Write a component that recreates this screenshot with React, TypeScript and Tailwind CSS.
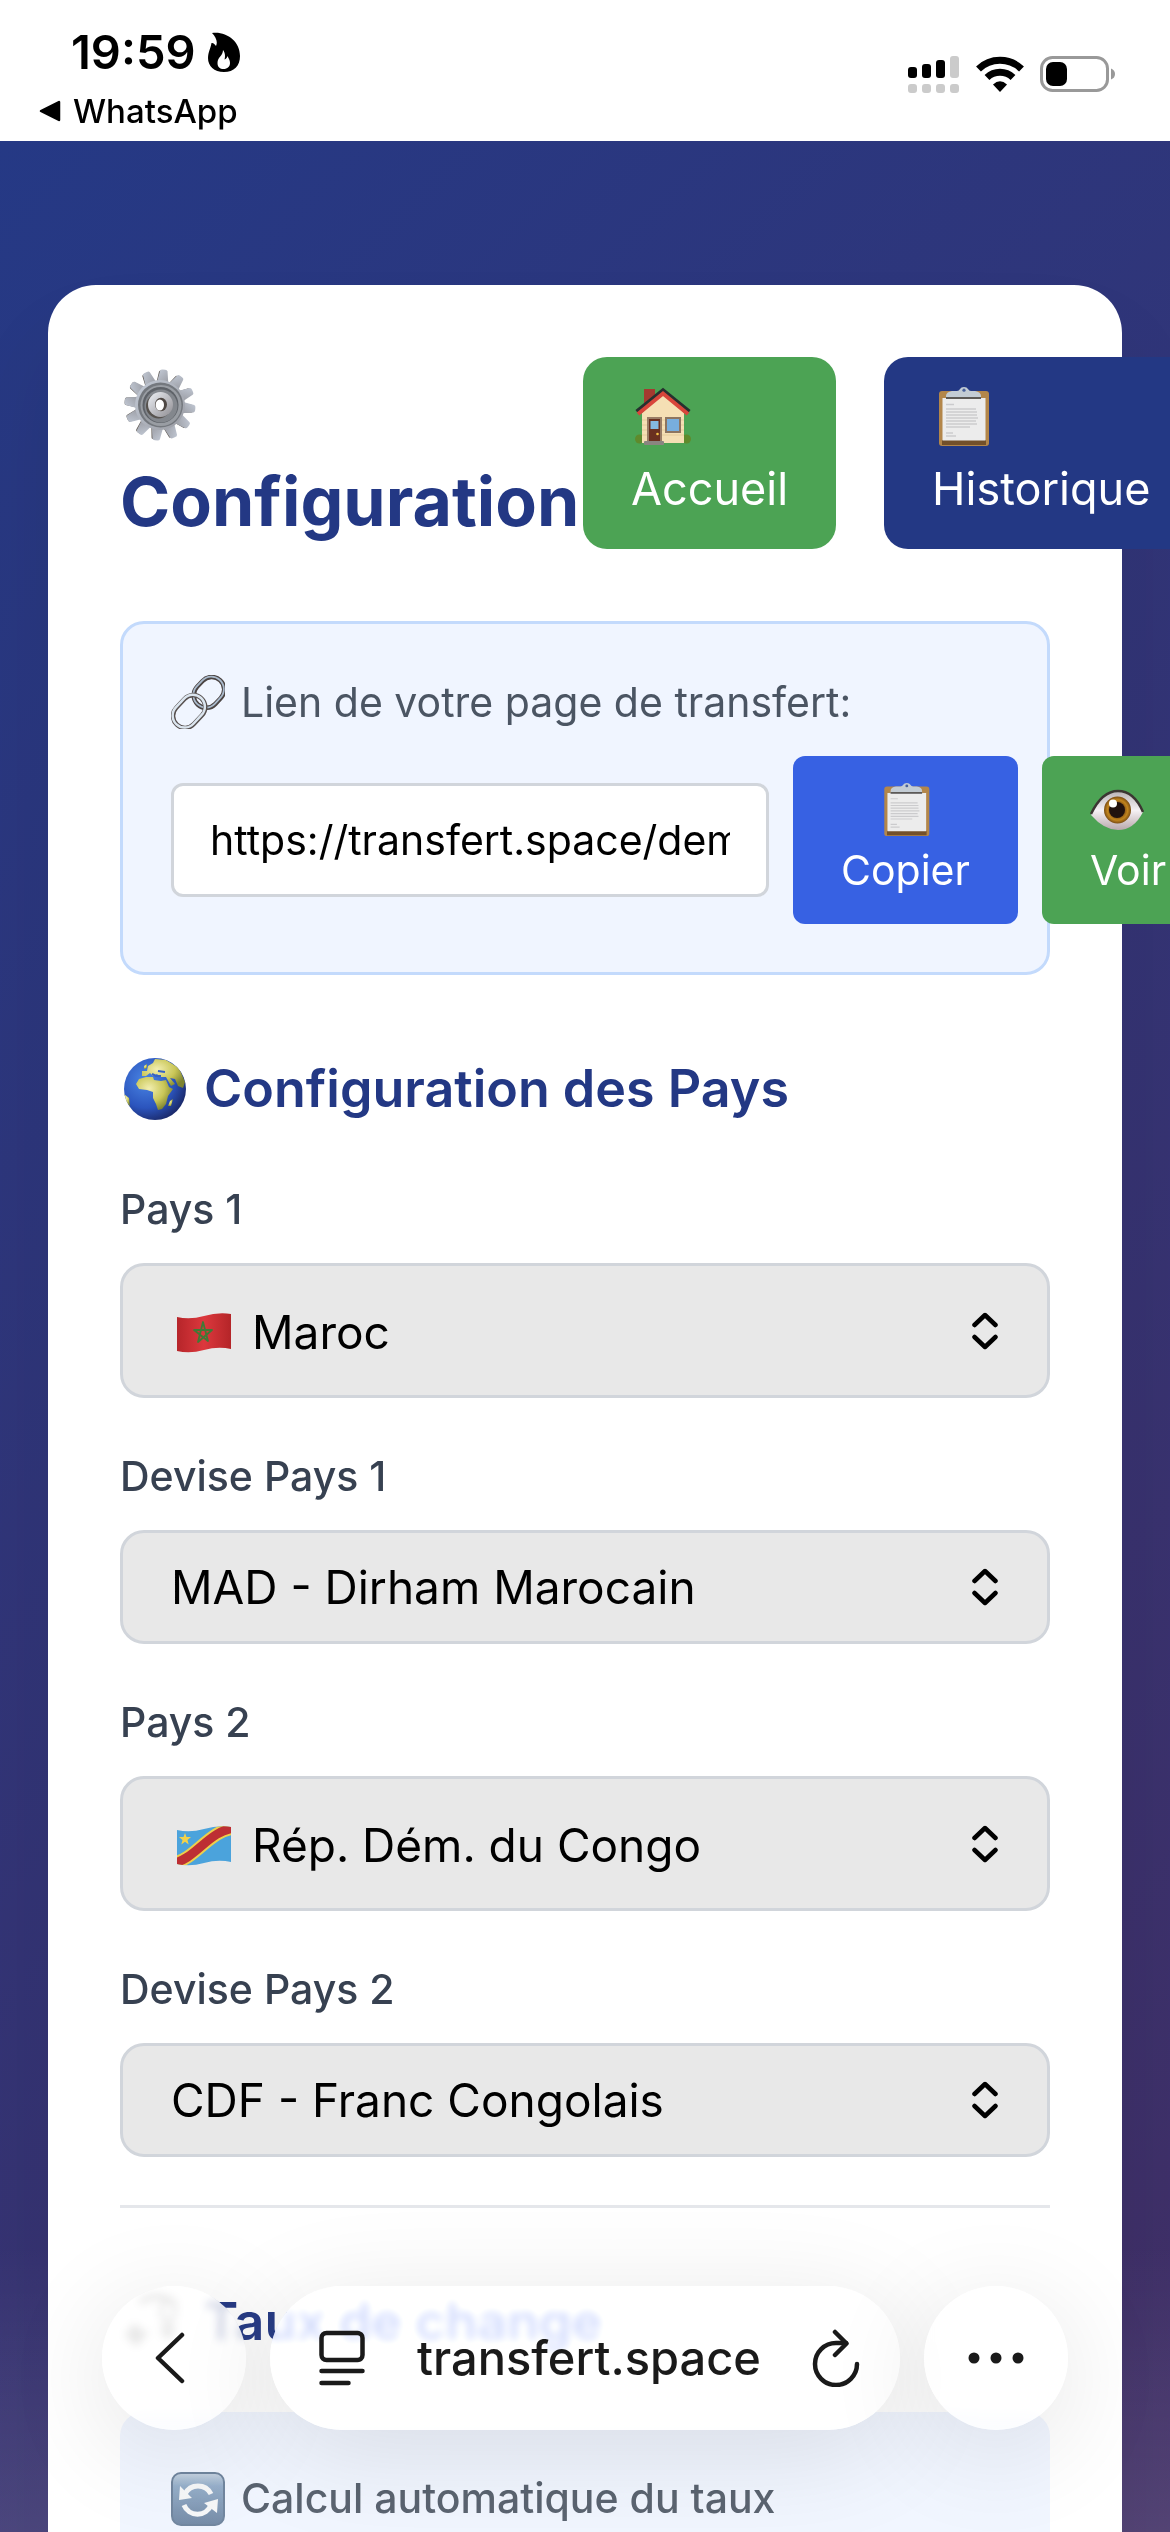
import React, { useState } from "react";

const TEETH = Array.from({ length: 12 }, (_, i) => i * 30 + 6);

function GearIcon() {
  return (
    <svg viewBox="0 0 72 72" className="h-[72px] w-[72px] shrink-0" aria-hidden="true">
      <defs>
        <linearGradient id="gearMetal" x1="0" y1="0" x2="1" y2="1">
          <stop offset="0" stopColor="#c3cad6" />
          <stop offset="1" stopColor="#9a9ca3" />
        </linearGradient>
        <linearGradient id="gearHub" x1="0" y1="0" x2="1" y2="1">
          <stop offset="0" stopColor="#eef1f6" />
          <stop offset="1" stopColor="#8f8d92" />
        </linearGradient>
      </defs>
      {TEETH.map((a) => (
        <path key={"s" + a} d="M31 14 L32.500 2 Q33 0.500 35 0.500 H38 Q40 0.500 40 2 L41.500 14 Z" fill="#5c5650" transform={`rotate(${a} 35 36) translate(-1 1)`} />
      ))}
      {TEETH.map((a) => (
        <path key={a} d="M30.500 14 L32.500 2 Q33 0.500 35 0.500 H37.500 Q39.500 0.500 40 2 L42 14 Z" fill="url(#gearMetal)" transform={`rotate(${a} 36 36)`} />
      ))}
      <circle cx="36" cy="36" r="25" fill="url(#gearMetal)" />
      <circle cx="36.500" cy="36" r="22.500" fill="#74787e" />
      <circle cx="37" cy="36.500" r="20.500" fill="#999da3" />
      <circle cx="36.500" cy="36" r="18" fill="#5e6268" />
      <circle cx="37" cy="37" r="16.500" fill="#83878d" />
      <circle cx="34.500" cy="37" r="12.500" fill="#57534f" />
      <circle cx="36.500" cy="35.500" r="12.500" fill="url(#gearHub)" />
      <ellipse cx="37" cy="35.500" rx="6" ry="6.800" fill="#4e4743" />
      <ellipse cx="35.800" cy="36" rx="4.200" ry="5.500" fill="#fff" />
    </svg>
  );
}

function HouseIcon() {
  return (
    <svg viewBox="0 0 60 60" className="h-[60px] w-[60px]" aria-hidden="true">
      <circle cx="8.500" cy="52" r="4.500" fill="#5f8a2c" />
      <circle cx="55.500" cy="52" r="4.500" fill="#5f8a2c" />
      <path d="M13 2 h11 v10 l-11 11z" fill="#a53a30" />
      <path d="M11 56 V26 L32 7 L53 26 V56z" fill="#f5dfb4" />
      <path d="M11 33h42M11 38h42M11 43h42M11 48h42" stroke="#e6cc9b" strokeWidth="1" />
      <path d="M6 25 L32 4 L58 25" fill="none" stroke="#27302f" strokeWidth="5" />
      <path d="M7 27 L32 6.500 L57 27" fill="none" stroke="#d8453b" strokeWidth="4" />
      <rect x="16" y="30" width="15" height="26" fill="#9a7d66" />
      <rect x="18" y="32" width="11" height="24" fill="#6a3020" />
      <rect x="19.500" y="34" width="8" height="8" fill="#84b9e2" />
      <circle cx="26.500" cy="47" r="1.300" fill="#f6c648" />
      <rect x="34" y="30" width="16" height="16" fill="#8d7560" />
      <rect x="36" y="32" width="12" height="12" fill="#78aedd" />
      <rect x="13" y="54" width="20" height="4" rx="1" fill="#8a8580" />
    </svg>
  );
}

function ClipboardIcon({ className }: { className: string }) {
  return (
    <svg viewBox="0 0 60 60" className={className} aria-hidden="true">
      <rect x="7" y="4" width="50" height="55" rx="3" fill="#b3864a" />
      <path d="M10 53h44v5H10z" fill="#73502a" />
      <path d="M10.500 11h43v42.500h-43z" fill="#ececec" />
      <path d="M14 17.500h8M14 22h30M14 25h31M14 28h31M14 31h32M14 34h30M14 37h31M14 40h24M14 46h7M14 49h10" stroke="#cbcbcd" strokeWidth="1.300" />
      <path d="M14 12 v-3 q0-4 6-5 h5 q2 0 3-2 q1-2 4-2 q3 0 4 2 q1 2 3 2 h4 q6 1 6 5 v3z" fill="#c3ccd4" />
      <path d="M14 10h35v2H14z" fill="#5d5a57" />
      <circle cx="32" cy="3.200" r="1.600" fill="#49629c" />
    </svg>
  );
}

function LinkIcon() {
  return (
    <svg viewBox="0 0 54 54" className="h-[54px] w-[54px]" aria-hidden="true">
      <g fill="none" transform="rotate(-47 27 27)">
        <rect x="25" y="16" width="33" height="25" rx="12.500" stroke="#4b4443" strokeWidth="4.500" />
        <rect x="25" y="15.500" width="33" height="25" rx="12.500" stroke="#a9b9cb" strokeWidth="1.800" />
        <rect x="-4" y="15" width="36" height="24" rx="12" stroke="#57504f" strokeWidth="4.500" />
        <rect x="-4" y="14.500" width="36" height="24" rx="12" stroke="#dbe5ef" strokeWidth="2.500" />
      </g>
    </svg>
  );
}

function EyeIcon() {
  return (
    <svg viewBox="0 0 54 42" className="h-[42px] w-[54px]" aria-hidden="true">
      <defs>
        <radialGradient id="iris">
          <stop offset="0.400" stopColor="#6a3c10" />
          <stop offset="0.750" stopColor="#c2851d" />
          <stop offset="1" stopColor="#7a4c12" />
        </radialGradient>
        <linearGradient id="sclera" x1="0" y1="0" x2="0" y2="1">
          <stop offset="0" stopColor="#b9b3b6" />
          <stop offset="0.500" stopColor="#f5f1f4" />
          <stop offset="1" stopColor="#b9a8ac" />
        </linearGradient>
      </defs>
      <path d="M1 26 Q12 2 28 2 Q44 2 53 23 Q44 41 28 41 Q14 41 1 26z" fill="url(#sclera)" />
      <path d="M1 25 Q12 2 28 2 Q44 2 53 23" fill="none" stroke="#3b3632" strokeWidth="2.500" />
      <circle cx="27.500" cy="21" r="13.500" fill="url(#iris)" />
      <circle cx="27" cy="21" r="8" fill="#21120e" />
      <circle cx="23" cy="14.500" r="4" fill="#fff" />
    </svg>
  );
}

function GlobeIcon() {
  return (
    <svg viewBox="0 0 62 62" className="h-[62px] w-[62px]" aria-hidden="true">
      <defs>
        <radialGradient id="sea" cx="0.350" cy="0.350" r="0.700">
          <stop offset="0" stopColor="#4a86e4" />
          <stop offset="0.650" stopColor="#2b54bd" />
          <stop offset="1" stopColor="#1b2a6c" />
        </radialGradient>
        <radialGradient id="land" cx="0.350" cy="0.350" r="0.700">
          <stop offset="0" stopColor="#f2eeb0" />
          <stop offset="0.600" stopColor="#c9c657" />
          <stop offset="1" stopColor="#7d8330" />
        </radialGradient>
        <clipPath id="globeClip"><circle cx="31" cy="31" r="31" /></clipPath>
      </defs>
      <circle cx="31" cy="31" r="31" fill="url(#sea)" />
      <g fill="url(#land)" clipPath="url(#globeClip)">
        <path d="M15 21 L22 19 L29 19 L30 22 L37 23 L42 22 L45 29 L49 31 L44 38 L42 46 L38 51 L34 52 L32 46 L29 40 L29 34 L23 32 L15 31 L12 26z" />
        <path d="M18 18 L18 13 L23 13 L24 8 L29 5 L31 1 L42 2 L55 10 L61 24 L59 30 L54 28 L51 21 L46 20 L51 26 L47 28 L42 19 L36 19 L33 16 L29 18 L26 15 L22 18z" />
        <path d="M46 43 L49 41 L47 48 L44 48z" />
        <path d="M0 36 L5 40 L6 48 L1 44z" />
        <path d="M20 8l3-2 0 4-3 1z" />
      </g>
      <path d="M28 16l4 2 5 0M34 13l7 1" stroke="#3561c5" strokeWidth="2.200" fill="none" />
    </svg>
  );
}

function MoroccoFlag() {
  return (
    <svg viewBox="0 0 54 40" className="h-10 w-[54px]" aria-hidden="true">
      <defs>
        <linearGradient id="maCloth">
          <stop offset="0" stopColor="#b6252a" />
          <stop offset="0.500" stopColor="#dc383d" />
          <stop offset="1" stopColor="#b42528" />
        </linearGradient>
      </defs>
      <path d="M0 4 Q13 7 27 3 T54 1 V36 Q41 33 27 37 T0 38z" fill="url(#maCloth)" />
      <path d="M26 9 L31 28 L17 17 H35 L21 29z" fill="none" stroke="#3f7a35" strokeWidth="1.800" strokeLinejoin="round" />
    </svg>
  );
}

function CongoFlag() {
  return (
    <svg viewBox="0 0 54 40" className="h-10 w-[54px]" aria-hidden="true">
      <defs>
        <clipPath id="cdCloth"><path d="M0 4 Q13 7 27 3 T54 1 V36 Q41 33 27 37 T0 38z" /></clipPath>
      </defs>
      <g clipPath="url(#cdCloth)">
        <path d="M0 0h54v40H0z" fill="#4ba3dc" />
        <path d="M-4 37 C18 34 32 4 58 2" fill="none" stroke="#edcf4b" strokeWidth="13" />
        <path d="M-4 37 C18 34 32 4 58 2" fill="none" stroke="#bd2e33" strokeWidth="9" />
        <path d="M8 7l1.500 4h4.500l-3.500 3 1.200 4.500L8 15.800 4.300 18.500 5.500 14 2 11h4.500z" fill="#f2d24a" />
      </g>
    </svg>
  );
}

function ExchangeIcon() {
  return (
    <svg viewBox="0 0 62 62" className="h-[62px] w-[62px]" fill="none" stroke="#8b8b8b" strokeWidth="6" aria-hidden="true">
      <path d="M16 12 A26 26 0 0 1 52 14" />
      <path d="M0 46 L10 32 L24 44z" fill="#8b8b8b" stroke="none" />
      <path d="M0 42 L12 56 L26 40z" fill="#8b8b8b" stroke="none" />
      <ellipse cx="44" cy="20" rx="7" ry="10" strokeWidth="4" />
      <path d="M44 30v18M36 37h16M37 43h14" strokeWidth="4" />
    </svg>
  );
}

function RefreshBadge() {
  return (
    <svg viewBox="0 0 54 54" className="h-[54px] w-[54px]" aria-hidden="true">
      <defs>
        <linearGradient id="badge" x1="0" y1="0" x2="0" y2="1">
          <stop offset="0" stopColor="#c1cfde" />
          <stop offset="0.250" stopColor="#8da8c6" />
          <stop offset="1" stopColor="#677f9d" />
        </linearGradient>
      </defs>
      <rect x="1" y="1" width="52" height="52" rx="9" fill="url(#badge)" stroke="#647b96" strokeWidth="2" />
      <g fill="none" stroke="#f5f6f7" strokeWidth="5">
        <path d="M14 22 A14.500 14.500 0 0 1 40 22" />
        <path d="M40 33 A14.500 14.500 0 0 1 13 33" />
      </g>
      <path d="M9 14 L8 28 L21 26z M46 41 L47 27 L33 31z" fill="#f5f6f7" />
    </svg>
  );
}

function FlameIcon() {
  return (
    <svg viewBox="0 0 32 40" className="h-10 w-8" aria-hidden="true">
      <path fillRule="evenodd" d="M4 1 C18 -1 32 9 32 24 C32 34 26 40 16 40 C6 40 0 34 0 26 C0 20 2.500 17 3.500 11 C5 10.500 7 12 8 14 C10 10 8 5 4 1z M15 18 C15 24 9.500 25 9.500 31 C9.500 35 12 37 15.500 37 C19.500 37 22 34.500 22 31 C22 28 20.500 26.500 19.500 24 C19 26 18 27 16.500 27.500 C17.500 24 17 20.500 15 18z" />
    </svg>
  );
}

function StatusBar() {
  return (
    <header className="flex h-[141px] shrink-0 items-start justify-between bg-white pl-[39px] pr-[54px] text-black">
      <div className="pt-6">
        <div className="flex items-center gap-3 pl-8 text-[47px] font-semibold leading-[56px]">
          <span>19:59</span>
          <FlameIcon />
        </div>
        <a href="#whatsapp" className="mt-2 flex items-center gap-3 text-[33px] font-medium leading-[46px]">
          <svg viewBox="0 0 22 22" className="h-[22px] w-[22px]" aria-hidden="true">
            <path d="M2 11 L20 2 V20z" stroke="#000" strokeWidth="2.500" strokeLinejoin="round" />
          </svg>
          WhatsApp
        </a>
      </div>
      <div className="flex items-center gap-4 pt-[55px]">
        <svg viewBox="0 0 52 38" className="h-[38px] w-[52px]" aria-hidden="true">
          <rect x="0" y="12" width="9" height="11" rx="3" />
          <rect x="14" y="9" width="9" height="14" rx="3" />
          <rect x="28" y="5" width="9" height="18" rx="3" />
          <g fill="#cbcbcb">
            <rect x="42" y="1" width="9" height="22" rx="3" />
            <rect x="0" y="29" width="9" height="9" rx="3" />
            <rect x="14" y="29" width="9" height="9" rx="3" />
            <rect x="28" y="29" width="9" height="9" rx="3" />
            <rect x="42" y="29" width="9" height="9" rx="3" />
          </g>
        </svg>
        <svg viewBox="0 0 48 38" className="h-[38px] w-12" fill="none" stroke="#000" strokeWidth="7" aria-hidden="true">
          <path d="M2.500 14 A31 31 0 0 1 45.500 14" />
          <path d="M11 22.500 A19 19 0 0 1 37 22.500" />
          <path d="M17 29.500 Q24 23 31 29.500 L24 37z" fill="#000" stroke="none" />
        </svg>
        <svg viewBox="0 0 76 38" className="h-[38px] w-[76px]" aria-hidden="true">
          <rect x="1.500" y="2.500" width="66" height="33" rx="11" fill="none" stroke="#999" strokeWidth="3" />
          <rect x="6" y="7" width="21" height="24" rx="7" />
          <path d="M71 13.500 Q75 15 75 19 Q75 23 71 24.500z" fill="#999" />
        </svg>
      </div>
    </header>
  );
}

type FieldProps = { id: string; label: string; options: string[]; flag?: React.ReactNode };

function SelectField({ id, label, options, flag }: FieldProps) {
  return (
    <div className="flex flex-col gap-6">
      <label htmlFor={id} className="text-[41px] font-medium leading-[60px] text-[#374151]">{label}</label>
      <div className="relative">
        <select
          id={id}
          className={
            flag
              ? "block h-[135px] w-full appearance-none rounded-[24px] border-[3px] border-[#d1d5db] bg-[#e8e8e8] pt-1 pl-[129px] pr-24 text-[46px] text-black"
              : "block h-[114px] w-full appearance-none rounded-[24px] border-[3px] border-[#d1d5db] bg-[#e8e8e8] pl-12 pr-24 text-[46px] text-black"
          }
        >
          {options.map((o) => <option key={o}>{o}</option>)}
        </select>
        {flag && <span className="pointer-events-none absolute inset-y-0 left-[57px] flex items-center pt-1">{flag}</span>}
        <span className="pointer-events-none absolute inset-y-0 right-[51px] flex items-center">
          <svg viewBox="0 0 28 38" className="h-[38px] w-7" fill="none" stroke="#000" strokeWidth="4.500" strokeLinecap="round" strokeLinejoin="round" aria-hidden="true">
            <path d="M3.500 13 L14 3 L24.500 13 M3.500 25 L14 35 L24.500 25" />
          </svg>
        </span>
      </div>
    </div>
  );
}

function SectionTitle({ icon, children }: { icon: React.ReactNode; children: React.ReactNode }) {
  return (
    <h2 className="flex items-center gap-[18px] pl-1 text-[52px] font-semibold leading-[84px] text-[#233884]">
      {icon}
      {children}
    </h2>
  );
}

function BrowserBar() {
  return (
    <nav aria-label="Navigateur" className="absolute inset-x-[102px] bottom-[102px] flex h-36 gap-6 text-[#1a1a1a]">
      <button aria-label="Retour" className="flex w-36 items-center justify-center rounded-full bg-white/80 shadow-[0_20px_110px_rgba(0,0,0,0.11)] backdrop-blur-[4px]">
        <svg viewBox="0 0 30 52" className="mr-2 h-[52px] w-[30px]" fill="none" stroke="currentColor" strokeWidth="4.500" strokeLinecap="round" strokeLinejoin="round" aria-hidden="true">
          <path d="M27 3 L3 26 L27 49" />
        </svg>
      </button>
      <div className="flex flex-1 items-center justify-between rounded-full bg-white/80 pl-12 pr-10 shadow-[0_20px_110px_rgba(0,0,0,0.11)] backdrop-blur-[4px] backdrop-brightness-110 backdrop-saturate-200">
        <button aria-label="Options de page">
          <svg viewBox="0 0 48 56" className="h-14 w-12" fill="none" stroke="currentColor" strokeWidth="4.500" strokeLinecap="round" aria-hidden="true">
            <rect x="3.500" y="3" width="41" height="27" rx="5" />
            <path d="M3.500 41h41M3.500 53h27" />
          </svg>
        </button>
        <span className="text-[47px] font-medium leading-[60px]">transfert.space</span>
        <button aria-label="Actualiser">
          <svg viewBox="0 0 48 58" className="h-[58px] w-12" fill="none" stroke="currentColor" strokeWidth="4.500" strokeLinecap="round" strokeLinejoin="round" aria-hidden="true">
            <path d="M45 35 A21 21 0 1 1 24 14 H34" />
            <path d="M23 3 L34.500 14.500 L23 26" />
          </svg>
        </button>
      </div>
      <button aria-label="Plus" className="flex w-36 items-center justify-center rounded-full bg-white/80 shadow-[0_20px_110px_rgba(0,0,0,0.11)] backdrop-blur-[4px]">
        <svg viewBox="0 0 56 12" className="h-3 w-14" fill="currentColor" aria-hidden="true">
          <circle cx="6" cy="6" r="5.500" />
          <circle cx="28" cy="6" r="5.500" />
          <circle cx="50" cy="6" r="5.500" />
        </svg>
      </button>
    </nav>
  );
}

export default function App() {
  const [url, setUrl] = useState("https://transfert.space/demo");
  return (
    <div className="relative flex h-screen flex-col overflow-hidden font-['Inter','Liberation_Sans',sans-serif]">
      <StatusBar />
      <main className="flex-1 overflow-x-hidden overflow-y-auto bg-[linear-gradient(135deg,#253985,#412f66)] px-12 pt-36 [scrollbar-width:none]">
        <div className="rounded-t-[48px] bg-white p-[72px] shadow-[0_60px_90px_rgba(0,0,0,0.08)]">
          <div className="mb-[72px] flex items-center justify-between">
            <h1 className="w-[463px] shrink-0 text-[68px] font-bold leading-[96px] text-[#233884]">
              <span className="flex h-24 items-center pl-1"><GearIcon /></span>
              Configuration
            </h1>
            <div className="flex shrink-0 gap-12 text-[45px] leading-[72px] text-white">
              <a href="#accueil" className="block rounded-[24px] bg-[#4ca354] px-12 py-6">
                <span className="flex h-[72px] items-center"><HouseIcon /></span>
                Accueil
              </a>
              <a href="#historique" className="block rounded-[24px] bg-[#233884] px-12 py-6">
                <span className="flex h-[72px] items-center"><ClipboardIcon className="h-[60px] w-[60px]" /></span>
                Historique
              </a>
            </div>
          </div>

          <section className="mb-[72px] rounded-[24px] border-[3px] border-[#c3dafc] bg-[#f0f5ff] p-12">
            <label htmlFor="lien" className="mb-6 flex items-center gap-4 whitespace-nowrap text-[41px] leading-[60px] text-[#4b5563]">
              <LinkIcon />
              Lien de votre page de transfert:
            </label>
            <div className="flex items-center gap-6 text-[41px] leading-[60px]">
              <input
                id="lien"
                type="text"
                value={url}
                onChange={(e) => setUrl(e.target.value)}
                className="h-[114px] w-[598px] shrink-0 rounded-[12px] border-[3px] border-[#d1d5db] bg-white px-9 text-black"
              />
              <button className="flex shrink-0 flex-col items-center rounded-[12px] bg-[#3761e3] px-12 py-6 text-white">
                <span className="flex h-[60px] items-center"><ClipboardIcon className="h-[54px] w-[54px]" /></span>
                Copier
              </button>
              <a href="#voir" className="block shrink-0 rounded-[12px] bg-[#4ca354] px-12 py-6 text-white">
                <span className="flex h-[60px] items-center"><EyeIcon /></span>
                Voir
              </a>
            </div>
          </section>

          <section className="flex flex-col gap-12 border-b-[3px] border-[#e5e7eb] pb-12">
            <SectionTitle icon={<GlobeIcon />}>Configuration des Pays</SectionTitle>
            <SelectField id="pays1" label="Pays 1" options={["Maroc"]} flag={<MoroccoFlag />} />
            <SelectField id="devise1" label="Devise Pays 1" options={["MAD - Dirham Marocain"]} />
            <SelectField id="pays2" label="Pays 2" options={["Rép. Dém. du Congo"]} flag={<CongoFlag />} />
            <SelectField id="devise2" label="Devise Pays 2" options={["CDF - Franc Congolais"]} />
          </section>

          <section className="flex flex-col gap-12 pt-[72px]">
            <SectionTitle icon={<ExchangeIcon />}>Taux de change</SectionTitle>
            <div className="rounded-[24px] bg-[#f0f5ff] p-12">
              <p className="flex h-[78px] items-center gap-4 pl-[3px] text-[41px] font-medium text-[#4b5563]">
                <RefreshBadge />
                Calcul automatique du taux
              </p>
            </div>
          </section>
        </div>
      </main>
      <div className="pointer-events-none absolute inset-x-0 bottom-0 h-72 bg-linear-to-t from-white/10 to-transparent" />
      <BrowserBar />
    </div>
  );
}
